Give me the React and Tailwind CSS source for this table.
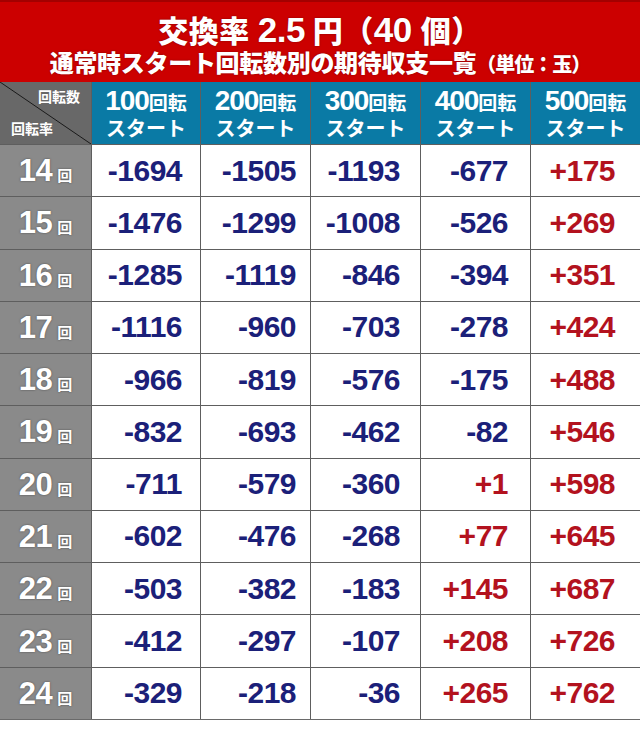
import React from "react";

const data = [
  [14, ["-1694", "-1505", "-1193", "-677", "+175"]],
  [15, ["-1476", "-1299", "-1008", "-526", "+269"]],
  [16, ["-1285", "-1119", "-846", "-394", "+351"]],
  [17, ["-1116", "-960", "-703", "-278", "+424"]],
  [18, ["-966", "-819", "-576", "-175", "+488"]],
  [19, ["-832", "-693", "-462", "-82", "+546"]],
  [20, ["-711", "-579", "-360", "+1", "+598"]],
  [21, ["-602", "-476", "-268", "+77", "+645"]],
  [22, ["-503", "-382", "-183", "+145", "+687"]],
  [23, ["-412", "-297", "-107", "+208", "+726"]],
  [24, ["-329", "-218", "-36", "+265", "+762"]],
];

const pads = ["pr-[18px]", "pr-[14px]", "pr-[20px]", "pr-[22px]", "pr-[25px]"];
const heads = ["100", "200", "300", "400", "500"];

const font = { fontFamily: '"Liberation Sans", "Noto Sans CJK JP", sans-serif' };

export default function App() {
  return (
    <div className="w-[640px] h-[731px] bg-white" style={font}>
      <div className="h-[82px] bg-[#cc0000] border-t-2 border-[#a30000] flex flex-col items-center text-white font-black [text-shadow:0_0_2px_rgba(80,0,0,0.6)]">
        <div className="text-[30px] leading-none mt-[10px] tracking-[0.5px] flex items-baseline">
          <span>交換率</span>
          <span className="text-[35px] font-bold ml-[8px] tracking-[-0.5px]">2.5</span>
          <span className="ml-[8px]">円（</span>
          <span className="text-[35px] font-bold tracking-[-0.5px]">40</span>
          <span className="ml-[9px]">個）</span>
        </div>
        <div className="text-[24px] leading-none mt-[5px] tracking-[-0.3px]">
          通常時スタート回転数別の期待収支一覧<span className="text-[20px] tracking-[-1px]">（単位：玉）</span>
        </div>
      </div>
      <div className="grid grid-cols-[91px_108px_109px_109px_109px_109px] grid-rows-[62px_repeat(11,51.27px)] gap-px bg-[#5e5e5e] border-b border-[#6a6a6a]">
        <div className="relative bg-[#686868] text-white font-bold text-[14px] leading-none">
          <svg className="absolute inset-0" width="91" height="62">
            <line x1="0" y1="0" x2="91" y2="62" stroke="#1a1a1a" strokeWidth="1" />
          </svg>
          <span className="absolute right-[11px] top-[8px]">回転数</span>
          <span className="absolute left-[11px] bottom-[8px]">回転率</span>
        </div>
        {heads.map((h) => (
          <div key={h} className="bg-[#0a7aa5] text-white font-bold flex flex-col items-center justify-center leading-none">
            <div className="flex items-baseline">
              <span className="text-[28px] tracking-[-1px]">{h}</span>
              <span className="text-[19px]">回転</span>
            </div>
            <div className="text-[20px] mt-[4px]">スタート</div>
          </div>
        ))}
        {data.map(([r, vals]) => (
          <React.Fragment key={r}>
            <div className="bg-[#8a8a8a] flex items-center justify-center text-white font-bold [text-shadow:0_0_2px_rgba(0,0,0,0.5)]">
              <span className="text-[31px] leading-none tracking-[-0.5px]">{r}</span>
              <span className="text-[15px] leading-none ml-[5px] mt-[10px]">回</span>
            </div>
            {vals.map((v, i) => (
              <div
                key={i}
                className={`bg-white flex items-center justify-end ${pads[i]} text-[30px] font-bold tracking-[-0.5px] leading-none ${
                  v.startsWith("+") ? "text-[#b3121e]" : "text-[#1b2079]"
                }`}
              >
                {v}
              </div>
            ))}
          </React.Fragment>
        ))}
      </div>
    </div>
  );
}
